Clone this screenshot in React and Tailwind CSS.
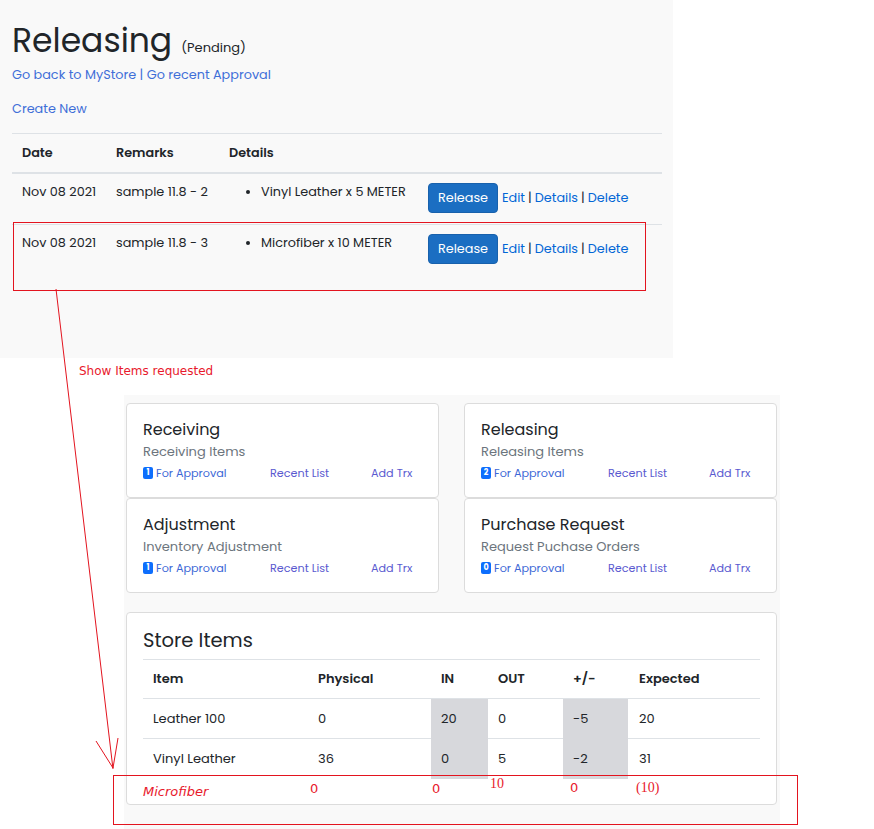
import React from 'react';

const font = "font-['Poppins','Inter',sans-serif]";
const note = "font-['Comic_Sans_MS','DejaVu_Sans',sans-serif]";

const releases = [
  { date: 'Nov 08 2021', remarks: 'sample 11.8 - 2', item: 'Vinyl Leather x 5 METER' },
  { date: 'Nov 08 2021', remarks: 'sample 11.8 - 3', item: 'Microfiber x 10 METER' },
];

const modules = [
  { title: 'Receiving', sub: 'Receiving Items', count: 1 },
  { title: 'Releasing', sub: 'Releasing Items', count: 2 },
  { title: 'Adjustment', sub: 'Inventory Adjustment', count: 1 },
  { title: 'Purchase Request', sub: 'Request Puchase Orders', count: 0 },
];

const items = [
  { name: 'Leather 100', physical: 0, inQty: 20, out: 0, adj: -5, expected: 20 },
  { name: 'Vinyl Leather', physical: 36, inQty: 0, out: 5, adj: -2, expected: 31 },
];

const ModuleCard = ({ title, sub, count }) => (
  <div className="h-[95px] bg-white border border-[#dcdcdc] rounded-[4px] px-4 pt-4">
    <div className="text-[16px] leading-[20px] text-[#212529]">{title}</div>
    <div className="text-[13px] leading-[20px] text-[#6c757d] mt-[2px]">{sub}</div>
    <div className="grid grid-cols-[127px_101px_auto] text-[11.2px] leading-[20px] mt-[1px]">
      <span className="flex items-center text-[#3b66d6]">
        <span className="inline-flex items-center justify-center w-[10px] h-[12px] rounded-[2px] bg-[#0d6efd] text-white text-[8px] font-bold mr-[3px]">
          {count}
        </span>
        For Approval
      </span>
      <span className="text-[#5a5ad0]">Recent List</span>
      <span className="text-[#5a5ad0]">Add Trx</span>
    </div>
  </div>
);

const Annotations = () => (
  <>
    <svg className="absolute inset-0 pointer-events-none" width="874" height="829">
      <rect x="13.5" y="222.5" width="632" height="68" fill="none" stroke="#e3141f" strokeWidth="1" />
      <rect x="113.5" y="775.5" width="684" height="49" fill="none" stroke="#e3141f" strokeWidth="1" />
      <line x1="56" y1="289" x2="113" y2="769" stroke="#e3141f" strokeWidth="1" />
      <line x1="96" y1="741" x2="113" y2="768" stroke="#e3141f" strokeWidth="1" />
      <line x1="118" y1="738" x2="113" y2="768" stroke="#e3141f" strokeWidth="1" />
    </svg>
    <span className={`absolute left-[79px] top-[363px] text-[12px] leading-[16px] text-[#e8192c] ${note}`}>
      Show Items requested
    </span>
    <span className={`absolute left-[143px] top-[784px] text-[13px] leading-[16px] italic text-[#e8192c] ${note}`}>
      Microfiber
    </span>
    <span className={`absolute left-[310px] top-[781px] text-[13px] leading-[16px] text-[#e8192c] ${note}`}>0</span>
    <span className={`absolute left-[432px] top-[781px] text-[13px] leading-[16px] text-[#e8192c] ${note}`}>0</span>
    <span className="absolute left-[490px] top-[776px] text-[14px] leading-[16px] text-[#e8192c] font-['Liberation_Serif',serif]">10</span>
    <span className={`absolute left-[570px] top-[780px] text-[13px] leading-[16px] text-[#e8192c] ${note}`}>0</span>
    <span className="absolute left-[636px] top-[780px] text-[14px] leading-[16px] text-[#e8192c] font-['Liberation_Serif',serif]">(10)</span>
  </>
);

export default function App() {
  return (
    <div className={`relative w-[874px] h-[829px] overflow-hidden bg-white text-[#212529] ${font}`}>
      {/* releasing list */}
      <div className="w-[673px] h-[358px] bg-[#f9f9f9] px-3 pt-[20px]">
        <div className="flex items-baseline gap-[9px]">
          <h1 className="text-[33px] leading-[41px] text-[#212529]">Releasing</h1>
          <span className="text-[13px]">(Pending)</span>
        </div>
        <div className="mt-[4px] text-[12.8px] leading-[20px] text-[#3f6fd8]">
          Go back to MyStore | Go recent Approval
        </div>
        <div className="mt-[14px] text-[12.8px] leading-[20px] text-[#3f6fd8]">Create New</div>

        <div className="mt-[14px] w-[650px] border-t border-[#dee2e6]">
          <div className="grid grid-cols-[94px_113px_199px_1fr] border-b-2 border-[#dee2e6] text-[12.8px] font-semibold leading-[20px]">
            <div className="px-[10px] py-[9px]">Date</div>
            <div className="px-[10px] py-[9px]">Remarks</div>
            <div className="px-[10px] py-[9px]">Details</div>
            <div />
          </div>
          {releases.map((r, i) => (
            <div
              key={i}
              className={`grid grid-cols-[94px_113px_199px_1fr] text-[12.8px] leading-[20px] ${i === 0 ? 'h-[51px] border-b border-[#dee2e6]' : 'h-[60px]'}`}
            >
              <div className="px-[10px] pt-[8px] whitespace-nowrap">{r.date}</div>
              <div className="px-[10px] pt-[8px] whitespace-nowrap">{r.remarks}</div>
              <div className="px-[10px] pt-[8px]">
                <ul className="list-disc pl-8">
                  <li>{r.item}</li>
                </ul>
              </div>
              <div className="px-[10px] pt-[9px] flex items-start">
                <button className="h-[30px] w-[70px] rounded-[4px] bg-[#1b6ec2] border border-[#1861ac] text-white text-[12.8px]">
                  Release
                </button>
                <span className="ml-[4px] h-[30px] flex items-center text-[12.8px]">
                  <span className="text-[#0366d6]">Edit</span>
                  <span className="mx-[3px]">|</span>
                  <span className="text-[#0366d6]">Details</span>
                  <span className="mx-[3px]">|</span>
                  <span className="text-[#0366d6]">Delete</span>
                </span>
              </div>
            </div>
          ))}
        </div>
      </div>

      {/* dashboard */}
      <div className="ml-[124px] mt-[37px] w-[656px] h-[434px] bg-[#f9f9f9] pt-[8px] px-[2px]">
        <div className="grid grid-cols-[313px_313px] gap-x-[25px]">
          {modules.map((m) => (
            <ModuleCard key={m.title} {...m} />
          ))}
        </div>

        <div className="mt-[19px] w-[651px] h-[193px] bg-white border border-[#dcdcdc] rounded-[4px] px-4 pt-[16px]">
          <div className="text-[19.5px] leading-[24px] text-[#212529]">Store Items</div>
          <div className="mt-[6px] border-t border-[#dee2e6]">
            <div className="grid grid-cols-[165px_123px_57px_75px_65px_1fr] border-b border-[#dee2e6] text-[13px] font-semibold leading-[20px]">
              <div className="px-[10px] py-[9px]">Item</div>
              <div className="px-[10px] py-[9px]">Physical</div>
              <div className="px-[10px] py-[9px]">IN</div>
              <div className="px-[10px] py-[9px]">OUT</div>
              <div className="px-[10px] py-[9px]">+/-</div>
              <div className="px-[11px] py-[9px]">Expected</div>
            </div>
            {items.map((it, i) => (
              <div
                key={it.name}
                className={`grid grid-cols-[165px_123px_57px_75px_65px_1fr] text-[13px] leading-[20px] ${i === 0 ? 'h-[40px] border-b border-[#dee2e6]' : 'h-[38px]'}`}
              >
                <div className="px-[10px] py-[10px]">{it.name}</div>
                <div className="px-[10px] py-[10px]">{it.physical}</div>
                <div className="px-[10px] py-[10px] bg-[#d7d8dc]">{it.inQty}</div>
                <div className="px-[10px] py-[10px]">{it.out}</div>
                <div className="px-[10px] py-[10px] bg-[#d7d8dc]">{it.adj}</div>
                <div className="px-[11px] py-[10px]">{it.expected}</div>
              </div>
            ))}
          </div>
        </div>
      </div>

      <Annotations />
    </div>
  );
}
